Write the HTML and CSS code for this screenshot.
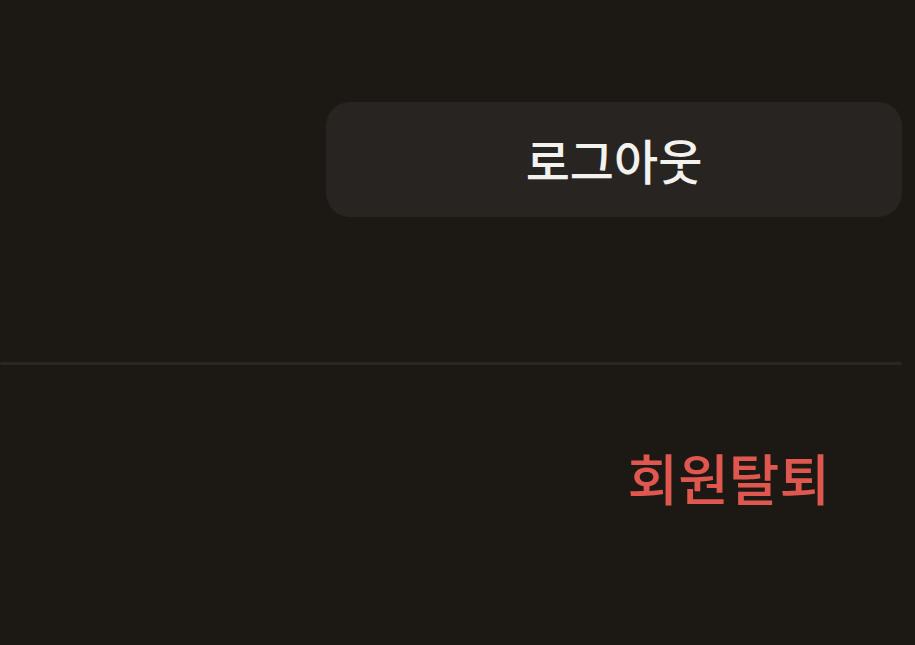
FILE: index.html
```html
<!DOCTYPE html>
<html lang="ko">
<head>
<meta charset="utf-8">
<link rel="stylesheet" href="styles.css">
</head>
<body>
<div class="page">
  <div class="actions">
    <button class="logout">로그아웃</button>
  </div>
  <div class="divider"></div>
  <div class="withdraw-row">
    <span class="withdraw">회원탈퇴</span>
  </div>
</div>
</body>
</html>
```
FILE: styles.css
```css
html, body {
  margin: 0;
  padding: 0;
  background: #1c1915;
  width: 915px;
  height: 645px;
  overflow: hidden;
}
.page {
  padding-right: 13px;
  font-family: "Noto Sans CJK KR", "Noto Sans", sans-serif;
}
.actions {
  display: flex;
  justify-content: flex-end;
  padding-top: 102px;
}
.logout {
  width: 576px;
  height: 115px;
  border: none;
  border-radius: 24px;
  background: #272421;
  color: #f4f2ef;
  font-family: "Noto Sans CJK KR", "Noto Sans", sans-serif;
  font-size: 48px;
  font-weight: 500;
  display: flex;
  align-items: center;
  justify-content: center;
  padding: 0;
  padding-bottom: 2px;
}
.divider {
  margin-top: 145px;
  height: 3px;
  background: #2a2623;
  border-radius: 2px;
}
.withdraw-row {
  display: flex;
  justify-content: flex-end;
  padding-right: 72px;
  padding-top: 76px;
}
.withdraw {
  color: #e0574f;
  font-size: 55px;
  font-weight: 500;
  line-height: 70px;
}
```
